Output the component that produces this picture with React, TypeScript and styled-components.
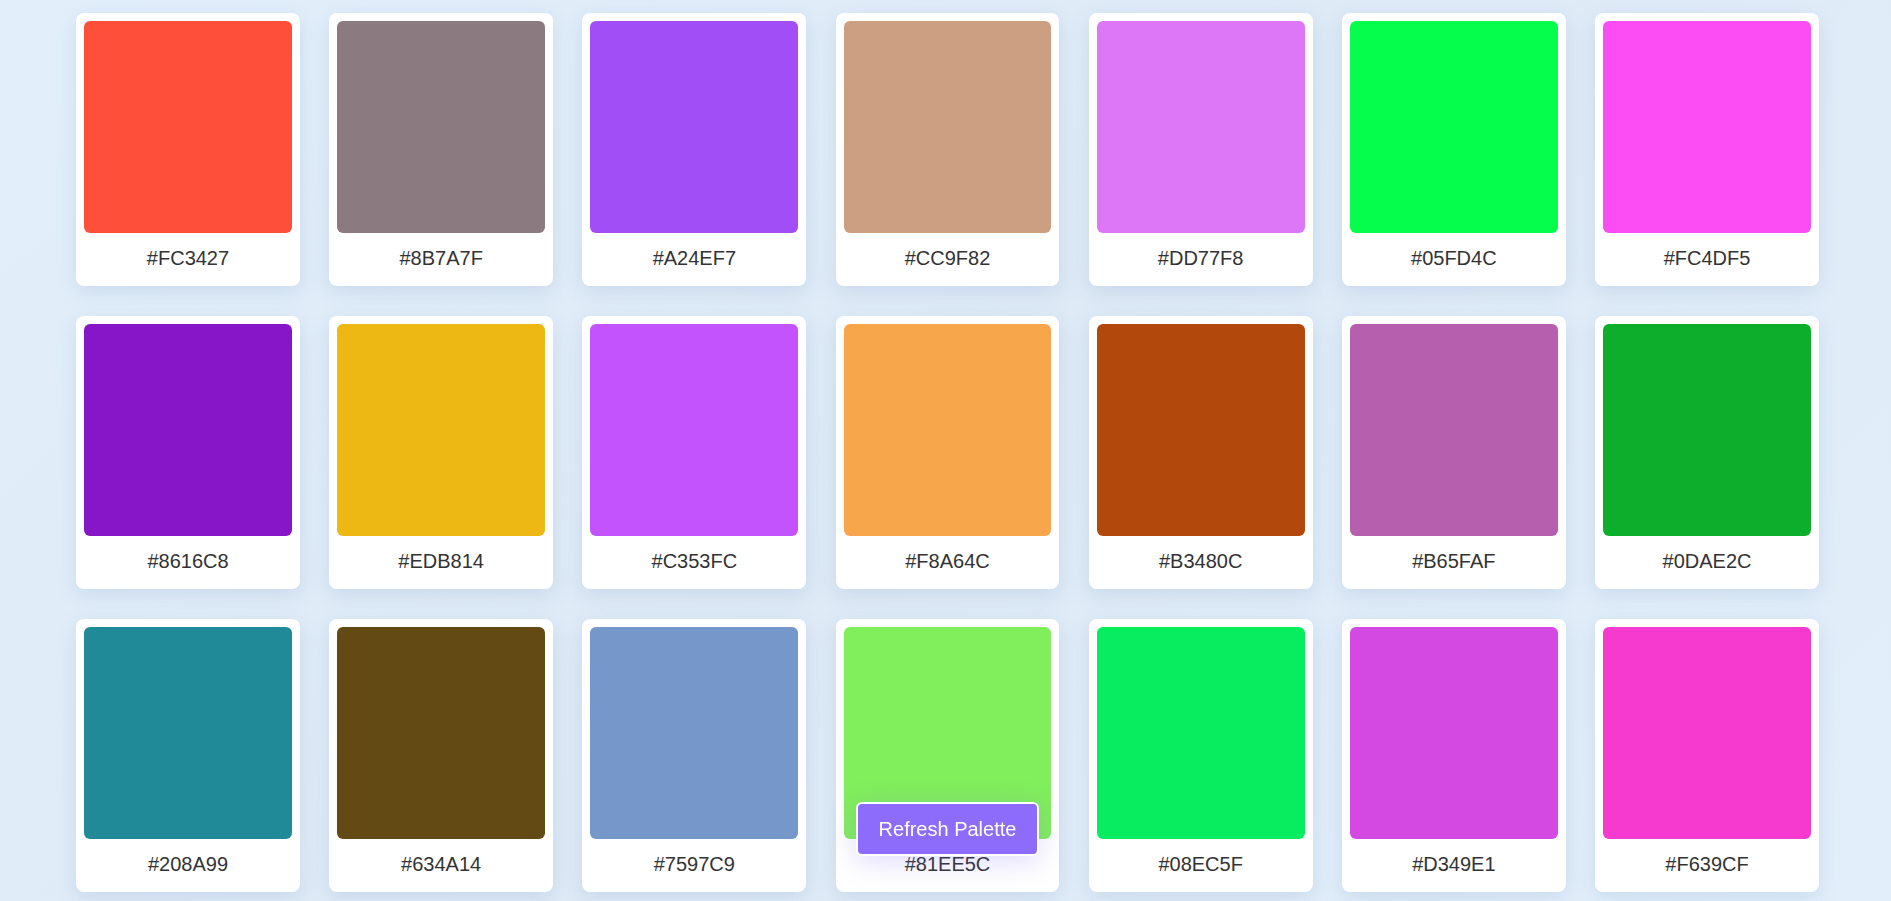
import React from "react";
import styled, { createGlobalStyle } from "styled-components";

const GlobalStyle = createGlobalStyle`
  html, body {
    margin: 0;
    padding: 0;
    overflow: hidden;
  }
  body {
    background: #e1eefa;
    font-family: "Liberation Sans", Arial, sans-serif;
  }
`;

const Page = styled.main`
  min-height: 901px;
  box-sizing: border-box;
  padding: 13px 72px 9px 76px;
  background: linear-gradient(135deg, #e2effb 0%, #deeaf6 50%, #e2effb 100%);
`;

const Grid = styled.div`
  display: grid;
  grid-template-columns: repeat(7, 1fr);
  column-gap: 29.2px;
  row-gap: 30px;
`;

const Card = styled.div`
  background: #ffffff;
  border-radius: 8px;
  padding: 8px 8px 0 8px;
  height: 273px;
  box-sizing: border-box;
  display: flex;
  flex-direction: column;
  box-shadow: 0 6px 20px rgba(110, 145, 190, 0.2);
`;

const Swatch = styled.div<{ $color: string }>`
  height: 212px;
  border-radius: 6px;
  background: ${(p) => p.$color};
`;

const Label = styled.div`
  flex: 1;
  display: flex;
  align-items: center;
  justify-content: center;
  padding-bottom: 3px;
  font-size: 20px;
  color: #333333;
`;

const RefreshButton = styled.button`
  position: fixed;
  left: 856px;
  top: 802px;
  width: 183px;
  height: 54px;
  box-sizing: border-box;
  border: 2px solid #ffffff;
  border-radius: 6px;
  background: #8d6cfb;
  color: #ffffff;
  font-family: "Liberation Sans", Arial, sans-serif;
  font-size: 20px;
  cursor: pointer;
  box-shadow: 0 6px 28px rgba(110, 90, 240, 0.22);
`;

const colors: { hex: string; shown?: string }[] = [
  { hex: "#FC3427", shown: "#FE4F3A" }, { hex: "#8B7A7F" }, { hex: "#A24EF7" }, { hex: "#CC9F82" },
  { hex: "#DD77F8" }, { hex: "#05FD4C" }, { hex: "#FC4DF5" },
  { hex: "#8616C8" }, { hex: "#EDB814" }, { hex: "#C353FC" }, { hex: "#F8A64C" },
  { hex: "#B3480C" }, { hex: "#B65FAF" }, { hex: "#0DAE2C" },
  { hex: "#208A99" }, { hex: "#634A14" }, { hex: "#7597C9" }, { hex: "#81EE5C" },
  { hex: "#08EC5F" }, { hex: "#D349E1" }, { hex: "#F639CF" },
];

export default function App() {
  return (
    <>
      <GlobalStyle />
      <Page>
        <Grid>
          {colors.map((c) => (
            <Card key={c.hex}>
              <Swatch $color={c.shown ?? c.hex} />
              <Label>{c.hex}</Label>
            </Card>
          ))}
        </Grid>
      </Page>
      <RefreshButton>Refresh Palette</RefreshButton>
    </>
  );
}
